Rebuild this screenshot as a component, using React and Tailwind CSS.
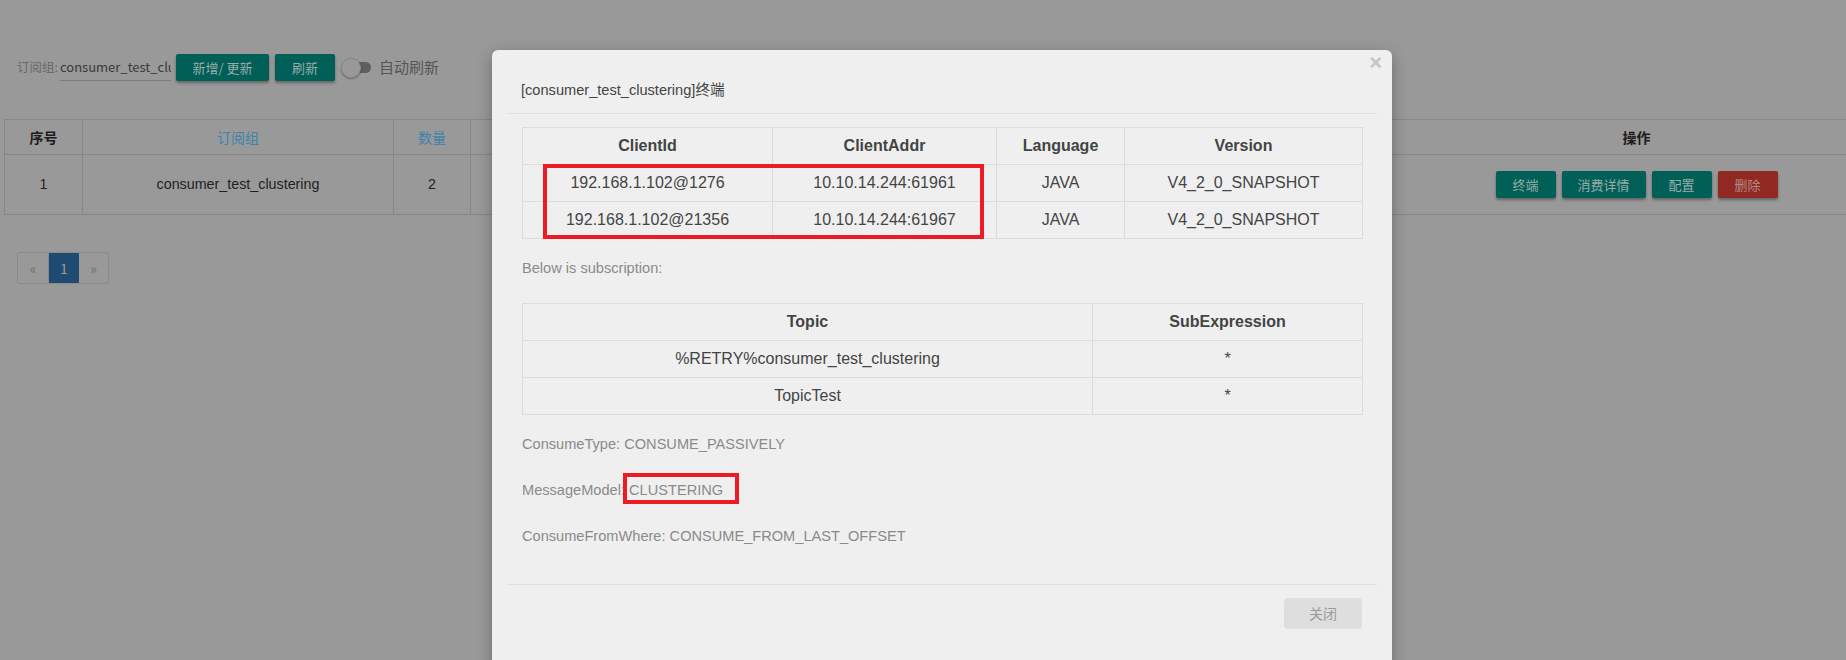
import React from "react";

const sans = "font-['Liberation_Sans','Noto_Sans_CJK_SC',sans-serif]";
const cjk = "font-['Noto_Sans_CJK_SC','Liberation_Sans',sans-serif]";

const tealBtn =
  "h-[27px] rounded-[2px] bg-[#005f57] text-[#9aaca8] text-[13px] shadow-[0_2px_3px_rgba(0,0,0,0.35)] flex items-center justify-center";
const redBtn =
  "h-[27px] rounded-[2px] bg-[#922822] text-[#b08c88] text-[13px] shadow-[0_2px_3px_rgba(0,0,0,0.35)] flex items-center justify-center";

const bgCell = "border border-[#878787] text-center";
const mCell = "border border-[#dcdcdc] text-center h-[37px] p-0";

const clients = [
  { id: "192.168.1.102@1276", addr: "10.10.14.244:61961", lang: "JAVA", ver: "V4_2_0_SNAPSHOT" },
  { id: "192.168.1.102@21356", addr: "10.10.14.244:61967", lang: "JAVA", ver: "V4_2_0_SNAPSHOT" },
];

const subs = [
  { topic: "%RETRY%consumer_test_clustering", exp: "*" },
  { topic: "TopicTest", exp: "*" },
];

function Toggle() {
  return (
    <div className="relative w-[30px] h-[20px] flex items-center">
      <div className="ml-[6px] w-[24px] h-[11px] rounded-full bg-[#5f5f5f]" />
      <div className="absolute left-0 top-0 w-[20px] h-[20px] rounded-full bg-[#999] border border-[#8a8a8a] shadow-[0_1px_2px_rgba(0,0,0,0.35)]" />
    </div>
  );
}

function Page() {
  return (
    <div className={`${cjk}`}>
      <div className="pt-[54px] pl-[17px] flex items-center h-[81px]">
        <span className="text-[12.5px] text-[#6a6a6a] mr-[2px]">订阅组:</span>
        <div className="w-[111px] h-[27px] border-b border-[#7c7c7c] overflow-hidden whitespace-nowrap text-[13px] text-[#3a3a3a] leading-[26px]">
          consumer_test_clustering
        </div>
        <button className={`${tealBtn} w-[93px] ml-[5px]`}>新增/ 更新</button>
        <button className={`${tealBtn} w-[60px] ml-[6px]`}>刷新</button>
        <div className="ml-[6px]">
          <Toggle />
        </div>
        <span className="ml-[8px] text-[15px] text-[#555]">自动刷新</span>
      </div>

      <table className="mt-[38px] ml-[4px] w-[1898px] table-fixed border-collapse">
        <colgroup>
          <col className="w-[78px]" />
          <col className="w-[311px]" />
          <col className="w-[77px]" />
          <col className="w-[180px]" />
          <col className="w-[180px]" />
          <col className="w-[180px]" />
          <col className="w-[180px]" />
          <col className="w-[180px]" />
          <col className="w-[532px]" />
        </colgroup>
        <thead>
          <tr className="h-[35px] text-[14px]">
            <th className={`${bgCell} font-bold text-[#1c1c1c]`}>序号</th>
            <th className={`${bgCell} font-normal text-[#3a84ad]`}>订阅组</th>
            <th className={`${bgCell} font-normal text-[#3a84ad]`}>数量</th>
            <th className={`${bgCell} font-bold text-[#1c1c1c]`}>版本</th>
            <th className={`${bgCell} font-normal text-[#3a84ad]`}>类型</th>
            <th className={`${bgCell} font-bold text-[#1c1c1c]`}>模式</th>
            <th className={`${bgCell} font-normal text-[#3a84ad]`}>TPS</th>
            <th className={`${bgCell} font-normal text-[#3a84ad]`}>延迟</th>
            <th className={`${bgCell} font-bold text-[#1c1c1c]`}>操作</th>
          </tr>
        </thead>
        <tbody>
          <tr className={`h-[60px] text-[14.3px] text-[#1f1f1f] ${sans}`}>
            <td className={bgCell}>1</td>
            <td className={bgCell}>consumer_test_clustering</td>
            <td className={bgCell}>2</td>
            <td className={bgCell}>V4_2_0_SNAPSHOT</td>
            <td className={bgCell}>PUSH</td>
            <td className={bgCell}>CLUSTERING</td>
            <td className={bgCell}>0</td>
            <td className={bgCell}>0</td>
            <td className={bgCell}>
              <div className={`flex items-center justify-center gap-[6px] ${cjk}`}>
                <button className={`${tealBtn} w-[60px]`}>终端</button>
                <button className={`${tealBtn} w-[84px]`}>消费详情</button>
                <button className={`${tealBtn} w-[60px]`}>配置</button>
                <button className={`${redBtn} w-[60px]`}>删除</button>
              </div>
            </td>
          </tr>
        </tbody>
      </table>

      <div className="mt-[37px] ml-[17px] flex h-[32px] w-[92px] rounded-[3px] border border-[#8a8a8a] overflow-hidden text-[14px]">
        <div className="w-[31px] flex items-center justify-center text-[#6d6d6d] border-r border-[#8a8a8a]">«</div>
        <div className="w-[30px] flex items-center justify-center bg-[#1f4b72] text-[#9a9a9a]">1</div>
        <div className="flex-1 flex items-center justify-center text-[#6d6d6d]">»</div>
      </div>
    </div>
  );
}

function ClientModal() {
  return (
    <div className={`absolute left-[492px] top-[50px] w-[900px] h-[640px] rounded-[6px] bg-[#efefef] shadow-[0_5px_15px_rgba(0,0,0,0.3)] ${sans}`}>
      <span className="absolute right-[10px] top-[1px] text-[22px] font-bold leading-[24px] text-[#c4c4c4]">×</span>

      <div className="mx-[15px] h-[64px] border-b border-[#e0e0e0] pt-[30px] pl-[14px] text-[14.6px] leading-[20px] text-[#444]">
        [consumer_test_clustering]终端
      </div>

      <div className="px-[30px] pt-[13px]">
        <table className="w-[840px] table-fixed border-collapse text-[16px] text-[#444]">
          <colgroup>
            <col className="w-[250px]" />
            <col className="w-[224px]" />
            <col className="w-[128px]" />
            <col className="w-[238px]" />
          </colgroup>
          <thead>
            <tr>
              <th className={`${mCell} font-bold`}>ClientId</th>
              <th className={`${mCell} font-bold`}>ClientAddr</th>
              <th className={`${mCell} font-bold`}>Language</th>
              <th className={`${mCell} font-bold`}>Version</th>
            </tr>
          </thead>
          <tbody>
            {clients.map((c) => (
              <tr key={c.id}>
                <td className={mCell}>{c.id}</td>
                <td className={mCell}>{c.addr}</td>
                <td className={mCell}>{c.lang}</td>
                <td className={mCell}>{c.ver}</td>
              </tr>
            ))}
          </tbody>
        </table>

        <p className="mt-[19px] text-[14.6px] leading-[20px] text-[#8a8a8a]">Below is subscription:</p>

        <table className="mt-[25px] w-[840px] table-fixed border-collapse text-[16px] text-[#444]">
          <colgroup>
            <col className="w-[570px]" />
            <col className="w-[270px]" />
          </colgroup>
          <thead>
            <tr>
              <th className={`${mCell} font-bold`}>Topic</th>
              <th className={`${mCell} font-bold`}>SubExpression</th>
            </tr>
          </thead>
          <tbody>
            {subs.map((s) => (
              <tr key={s.topic}>
                <td className={mCell}>{s.topic}</td>
                <td className={mCell}>{s.exp}</td>
              </tr>
            ))}
          </tbody>
        </table>

        <div className="text-[14.6px] leading-[20px] text-[#8a8a8a]">
          <p className="mt-[19px]">ConsumeType: CONSUME_PASSIVELY</p>
          <p className="mt-[26px]">MessageModel: CLUSTERING</p>
          <p className="mt-[26px]">ConsumeFromWhere: CONSUME_FROM_LAST_OFFSET</p>
        </div>
      </div>

      <div className="mx-[15px] mt-[38px] border-t border-[#e0e0e0] pt-[13px] pr-[15px] flex justify-end">
        <button className={`w-[78px] h-[31px] rounded-[4px] bg-[#dedede] text-[14px] text-[#9a9a9a] ${cjk}`}>关闭</button>
      </div>

      {/* red annotation boxes */}
      <div className="absolute left-[51px] top-[114px] w-[441px] h-[75px] border-[4px] border-[#ed1c24]" />
      <div className="absolute left-[131px] top-[423px] w-[116px] h-[31px] border-[4px] border-[#ed1c24]" />
    </div>
  );
}

export default function App() {
  return (
    <div className="relative w-[1846px] h-[660px] overflow-hidden bg-[#999999]">
      <Page />
      <ClientModal />
    </div>
  );
}
